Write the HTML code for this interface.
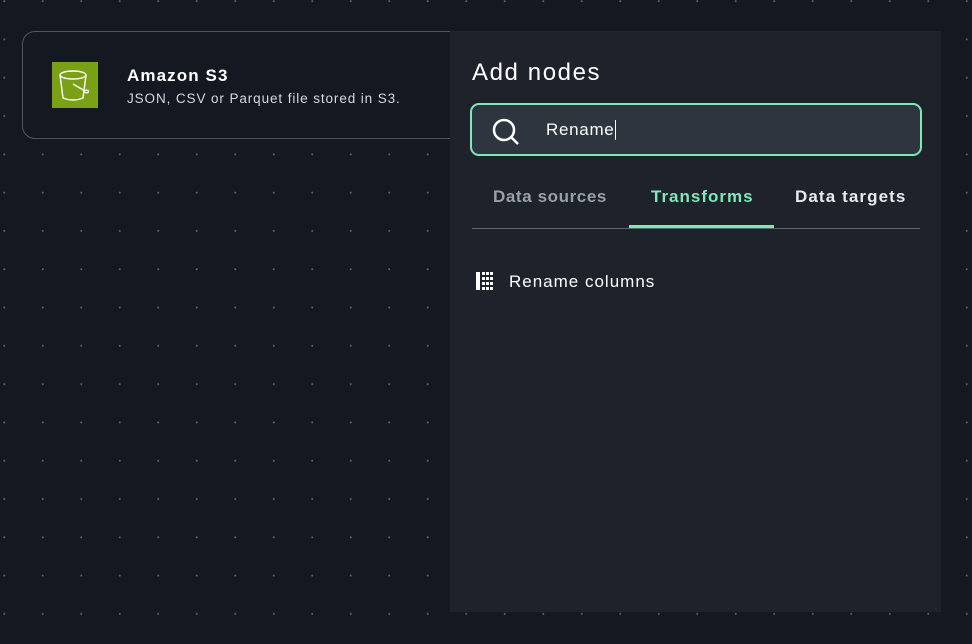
<!DOCTYPE html>
<html><head><style>
*{margin:0;padding:0;box-sizing:border-box}
body{width:972px;height:644px;overflow:hidden;background:#141820;font-family:"Liberation Sans",sans-serif;position:relative;
background-image:radial-gradient(circle,#5a6068 0.8px,transparent 1.2px);background-size:38.5px 38.3px;background-position:-15px -18px}
.card{position:absolute;left:22px;top:31px;width:440px;height:108px;border:1px solid #50555e;border-radius:13px;background:#141820}
.ic{position:absolute;left:52px;top:62px;width:46px;height:46px;background:#7aa116}
.t1{position:absolute;color:#fff;font-weight:bold;font-size:17px;letter-spacing:1.1px}
.t2{position:absolute;color:#d5d9de;font-size:13.5px;letter-spacing:0.9px}
.panel{position:absolute;left:450px;top:31px;width:491px;height:581px;background:#1d222b}
h1{position:absolute;left:22px;top:28px;font-size:24px;font-weight:normal;color:#fff;letter-spacing:1.6px}
.search{position:absolute;left:20px;top:72px;width:452px;height:53px;border:2px solid #7ee8b8;border-radius:9px;background:#2f353f}
.search span{position:absolute;left:74px;top:15px;color:#fff;font-size:17px;border-right:1px solid #fff;padding-right:1px;line-height:20px;letter-spacing:0.7px}
.tab{position:absolute;top:156px;font-size:17px;font-weight:bold}
.line{position:absolute;left:22px;top:197px;width:448px;height:1px;background:#5f656e}
.ul{position:absolute;left:179px;top:194px;width:145px;height:3px;background:#7ee8b8}
.item{position:absolute;left:59px;top:241px;color:#fff;font-size:17px;letter-spacing:1px}
</style></head><body>
<div class="card"></div>
<div class="ic"><svg width="46" height="46" viewBox="0 0 46 46" fill="none" stroke="#fff" stroke-width="1.4"><ellipse cx="21" cy="13" rx="13" ry="4"/><path d="M8 13 L11 36 Q21 40 31 36 L34 13"/><path d="M21 22 L33 29"/><ellipse cx="34.5" cy="29.5" rx="2" ry="1.3"/></svg></div>
<div class="t1" style="left:127px;top:66px">Amazon S3</div>
<div class="t2" style="left:127px;top:91px">JSON, CSV or Parquet file stored in S3.</div>
<div class="panel">
<h1>Add nodes</h1>
<div class="search"><svg style="position:absolute;left:20px;top:13px" width="28" height="28" viewBox="0 0 28 28" fill="none" stroke="#fff" stroke-width="2.5"><circle cx="12" cy="12" r="10"/><path d="M19 19 L26 26"/></svg><span>Rename</span></div>
<div class="tab" style="left:43px;color:#9aa0a8;letter-spacing:0.6px">Data sources</div>
<div class="tab" style="left:201px;color:#7ee8b8;letter-spacing:1px">Transforms</div>
<div class="tab" style="left:345px;color:#e8eaed;letter-spacing:1.1px">Data targets</div>
<div class="line"></div><div class="ul"></div>
<svg style="position:absolute;left:26px;top:241px" width="18" height="18" viewBox="0 0 18 18" fill="#fff"><rect x="0" y="0" width="4" height="18"/><rect x="6" y="0" width="3" height="3"/><rect x="10" y="0" width="3" height="3"/><rect x="14" y="0" width="3" height="3"/><rect x="6" y="5" width="3" height="3"/><rect x="10" y="5" width="3" height="3"/><rect x="14" y="5" width="3" height="3"/><rect x="6" y="10" width="3" height="3"/><rect x="10" y="10" width="3" height="3"/><rect x="14" y="10" width="3" height="3"/><rect x="6" y="15" width="3" height="3"/><rect x="10" y="15" width="3" height="3"/><rect x="14" y="15" width="3" height="3"/></svg>
<div class="item">Rename columns</div>
</div>
</body></html>
